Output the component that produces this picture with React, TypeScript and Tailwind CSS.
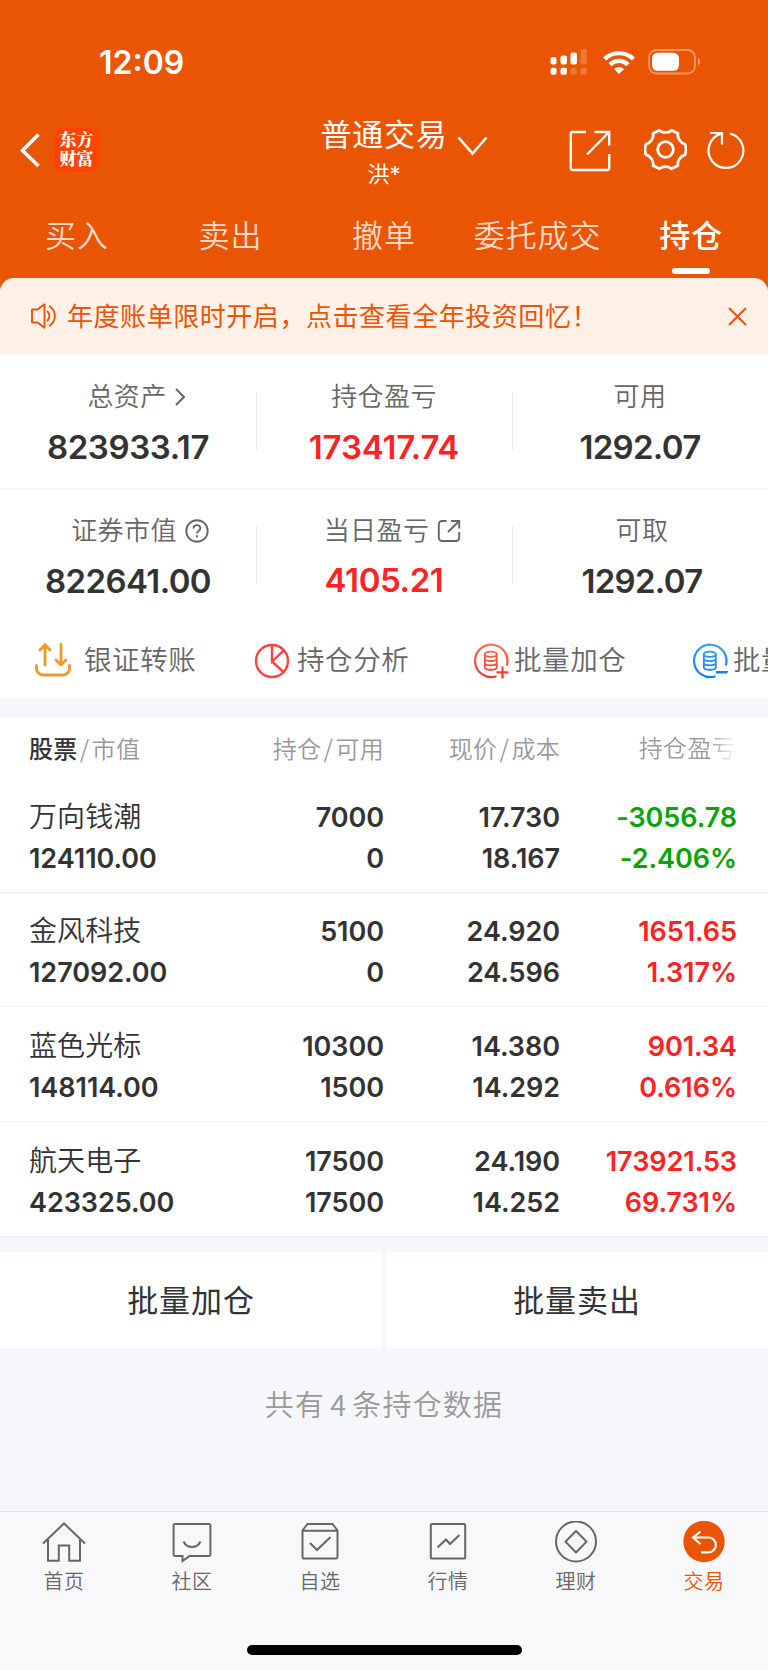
import React from "react";

const ORANGE = "#ea5504";

function SignalIcon() {
  return (
    <svg width="38" height="28" viewBox="0 0 38 28" fill="#fff">
      <rect x="1.500" y="9" width="6" height="7.5" rx="2" />
      <rect x="11.500" y="7.500" width="6.4" height="9" rx="2" />
      <rect x="21.500" y="4.500" width="6.4" height="12" rx="2" />
      <rect x="31.500" y="1" width="6.4" height="15.500" rx="2" opacity=".2" />
      <rect x="1.500" y="19.800" width="6" height="7" rx="2" />
      <rect x="11.500" y="19.800" width="6.4" height="7" rx="2" />
      <rect x="21.500" y="19.800" width="6.4" height="7" rx="2" opacity=".2" />
      <rect x="31.500" y="19.800" width="6.4" height="7" rx="2" opacity=".2" />
    </svg>
  );
}

function WifiIcon() {
  return (
    <svg width="34" height="26" viewBox="0 0 34 26" fill="none" stroke="#fff" strokeWidth="4.4">
      <path d="M2.6 10a20.5 20.5 0 0 1 28.8 0" />
      <path d="M8 15.6a12.8 12.8 0 0 1 18 0" />
      <path d="M17 25l-5-5.1a7.2 7.2 0 0 1 10 0z" fill="#fff" stroke="none" />
    </svg>
  );
}

function BatteryIcon() {
  return (
    <svg width="54" height="26" viewBox="0 0 54 26" fill="none">
      <rect x="1" y="1" width="46" height="23.500" rx="7.5" stroke="#fff" strokeOpacity=".4" strokeWidth="1.8" />
      <rect x="4" y="3.800" width="27" height="18" rx="5.5" fill="#fff" />
      <path d="M50 9c2.7 1.2 2.7 6.2 0 7.4z" fill="#fff" fillOpacity=".45" />
    </svg>
  );
}

function ExportIcon() {
  return (
    <svg width="42" height="42" viewBox="0 0 42 42" fill="none" stroke="#fff" strokeWidth="2.4">
      <path d="M17 2H3.5A1.8 1.8 0 0 0 1.8 3.7v34.6A1.8 1.8 0 0 0 3.5 40h35a1.8 1.8 0 0 0 1.7-1.7V24" />
      <path d="M25.500 2h14.700v13.500M40 2.200L18 24.500" />
    </svg>
  );
}

function GearIcon() {
  return (
    <svg width="43" height="43" viewBox="0 0 44 44" fill="none" stroke="#fff" strokeWidth="2.9" strokeLinejoin="round">
      <path d="M16 2.200C18 5.300 26 5.300 28 2.200L34.700 5.500C33.800 10 37.300 15.500 41.800 16.500C43.200 19.500 43.200 24.500 41.800 27.500C37.300 28.500 33.800 34 34.700 38.500L28 41.800C26 38.700 18 38.700 16 41.800L9.300 38.500C10.200 34 6.700 28.500 2.200 27.500C.8 24.500 .8 19.500 2.200 16.500C6.700 15.500 10.200 10 9.300 5.500Z" />
      <circle cx="22" cy="22" r="8" />
    </svg>
  );
}

function RefreshIcon() {
  return (
    <svg width="38" height="38" viewBox="0 0 38 38" fill="none" stroke="#fff" strokeWidth="2.200">
      <path d="M23 2.600A17.400 17.400 0 1 1 13.800 2.900" />
      <path d="M3 2h12v11.500" />
    </svg>
  );
}

function SpeakerIcon() {
  return (
    <svg width="26" height="26" viewBox="0 0 26 26" fill="none" stroke={ORANGE} strokeWidth="1.900">
      <path d="M2 6.500h5.500L14.500 1.300v23.400L7.500 19.500H2z" strokeLinejoin="round" />
      <path d="M17 8a6.500 6.500 0 0 1 0 10.200M19 3a11.500 11.500 0 0 1 0 20" />
    </svg>
  );
}

function TransferIcon() {
  return (
    <svg className="mt-[-2px] ml-[1px]" width="36" height="34" viewBox="0 0 36 34" fill="none" stroke="#f19a2b" strokeWidth="2.800" strokeLinecap="round" strokeLinejoin="round">
      <path d="M10 22V2M5 7l5-5.400L15 7M26 1.500v20M21 17l5 5 5-5" />
      <path d="M1.500 22.500v3a6.500 6.500 0 0 0 6.500 6.500h20a6.500 6.500 0 0 0 6.500-6.500v-3" />
    </svg>
  );
}

function PieIcon() {
  return (
    <svg width="36" height="36" viewBox="0 0 36 36" fill="none" stroke="#fa4343" strokeWidth="2.400">
      <circle cx="18" cy="18" r="16" />
      <path d="M18 2v16.500L30 7.200M18 18.500l11.500 10.500" />
    </svg>
  );
}

function BatchIcon({ minus = false }: { minus?: boolean }) {
  const id = minus ? "batch-minus" : "batch-plus";
  return (
    <svg width="36" height="36" viewBox="0 0 36 36" fill="none" stroke={`url(#${id})`} strokeWidth="2.200">
      <defs>
        <linearGradient id={id} gradientUnits="userSpaceOnUse" x1="0" y1="0" x2="0" y2="36">
          <stop offset="0" stopColor={minus ? "#3aa5f5" : "#ff7455"} />
          <stop offset="1" stopColor={minus ? "#0a78f0" : "#f5302a"} />
        </linearGradient>
      </defs>
      <path d="M33.800 22.500A16.200 16.200 0 1 0 23.500 33.200" />
      <ellipse cx="17.800" cy="11.200" rx="6" ry="2.600" strokeWidth="1.800" />
      <path d="M11.800 11.200v13c0 3.400 12 3.400 12 0v-13M11.800 15.500c0 3.400 12 3.400 12 0M11.800 19.800c0 3.400 12 3.400 12 0" strokeWidth="1.800" />
      {minus ? <path d="M24 29.300h11.500l.01.01" strokeWidth="2.400" /> : <path d="M23.500 29.300H35.500M29.500 23.500v12" strokeWidth="2.200" />}
    </svg>
  );
}

const columnTabs = ["买入", "卖出", "撤单", "委托成交", "持仓"];

interface MetricProps {
  label: string;
  value: string;
  red?: boolean;
  icon?: React.ReactNode;
  className?: string;
  labelClass?: string;
  valueClass?: string;
}

function Metric({ label, value, red, icon, className = "", labelClass = "", valueClass = "mt-[13.500px] tracking-[-0.400px]" }: MetricProps) {
  return (
    <div className={`flex w-64 flex-col items-center ${className}`}>
      <div className={`flex h-[36px] items-center text-[26px] leading-[36px] font-[350] tracking-[0.400px] text-[#666] ${labelClass}`}>
        {label}
        {icon}
      </div>
      <div className={`h-[36px] text-[33px] leading-[36px] font-semibold ${valueClass} ${red ? "text-[#fb2323]" : "text-[#333]"}`}>{value}</div>
    </div>
  );
}

interface Holding {
  name: string;
  market: string;
  held: string;
  usable: string;
  price: string;
  cost: string;
  profit: string;
  rate: string;
  down?: boolean;
}

const holdings: Holding[] = [
  { name: "万向钱潮", market: "124110.00", held: "7000", usable: "0", price: "17.730", cost: "18.167", profit: "-3056.78", rate: "-2.406%", down: true },
  { name: "金风科技", market: "127092.00", held: "5100", usable: "0", price: "24.920", cost: "24.596", profit: "1651.65", rate: "1.317%" },
  { name: "蓝色光标", market: "148114.00", held: "10300", usable: "1500", price: "14.380", cost: "14.292", profit: "901.34", rate: "0.616%" },
  { name: "航天电子", market: "423325.00", held: "17500", usable: "17500", price: "24.190", cost: "14.252", profit: "173921.53", rate: "69.731%" },
];

function Pair({ top, bottom, className }: { top: string; bottom: string; className: string }) {
  return (
    <div className={`flex flex-col text-right text-[27px] leading-[41.300px] font-semibold tracking-[-0.050px] ${className}`}>
      <span>{top}</span>
      <span>{bottom}</span>
    </div>
  );
}

function HoldingRow({ item }: { item: Holding }) {
  return (
    <div className="flex h-[114.700px] border-b border-[#f1f1f3] pt-[18.500px] text-[#333]">
      <div className="flex w-[214px] flex-col pl-[29px] leading-[41.300px]">
        <span className="text-[28px] font-[350] tracking-[0.100px]">{item.name}</span>
        <span className="text-[27px] font-semibold tracking-[-0.050px]">{item.market}</span>
      </div>
      <Pair top={item.held} bottom={item.usable} className="w-[170px]" />
      <Pair top={item.price} bottom={item.cost} className="w-[176px]" />
      <Pair top={item.profit} bottom={item.rate} className={item.down ? "w-[177px] text-[#0ba30b]" : "w-[177px] text-[#fb2323]"} />
    </div>
  );
}

function Slash() {
  return <span className="mx-[2.200px] font-['Noto_Sans_CJK_SC']">/</span>;
}

const navIcons: Record<string, React.ReactNode> = {
  首页: (
    <>
      <path d="M1 22.500L22 2.500l21 20" />
      <path d="M6 18.500v21.200h10.800V24.500h10.400v15.200H38V18.500" />
    </>
  ),
  社区: (
    <>
      <path d="M5 3h34a1.400 1.400 0 0 1 1.400 1.400V33.600A1.400 1.400 0 0 1 39 35H19.500L12.500 40v-5H5a1.400 1.400 0 0 1-1.400-1.400V4.400A1.400 1.400 0 0 1 5 3z" />
      <path d="M13.500 20.500c3.500 7.300 13.500 7.300 17 0" />
    </>
  ),
  自选: (
    <>
      <path d="M4.500 9.500L9.500 3h25l5 6.500v26.200A1.800 1.800 0 0 1 37.700 37.500H6.300a1.800 1.800 0 0 1-1.800-1.800zM4.500 9.800h35" />
      <path d="M12 22l7 7L32.500 16" />
    </>
  ),
  行情: (
    <>
      <rect x="4.800" y="3" width="34.400" height="34.600" rx="1.200" />
      <path d="M11.500 26.500l8.500-8 4 4.500L33.500 14" />
    </>
  ),
  理财: (
    <>
      <circle cx="22" cy="20.500" r="20" />
      <path d="M22 10L32.500 20.600 22 31.500 11.500 20.600z" strokeLinejoin="round" />
    </>
  ),
  交易: (
    <>
      <circle cx="22" cy="20.500" r="20.700" fill={ORANGE} stroke="none" />
      <path d="M18.500 10.500L11 16.500l7.500 6.500M11 16.500h15.500a7.400 7.400 0 0 1 0 14.800H19" stroke="#fff" strokeWidth="2.200" />
    </>
  ),
};

export default function App() {
  return (
    <div className="flex h-[1670px] w-[768px] flex-col overflow-hidden bg-[#f6f7fa] font-['Inter','Noto_Sans_CJK_SC',sans-serif] whitespace-nowrap">
      <header className="flex h-[290px] shrink-0 flex-col bg-[#ea5504] text-white">
        <div className="flex h-[94px] items-start pt-[48px] pl-[99px]">
          <div className="w-[450px] text-[32px] leading-[30px] font-semibold">12:09</div>
          <div className="flex items-center">
            <SignalIcon />
            <div className="ml-[15px]"><WifiIcon /></div>
            <div className="ml-[12px]"><BatteryIcon /></div>
          </div>
        </div>
        <div className="flex h-[104px] items-center pl-[19px]">
          <svg className="mt-[7px]" width="22" height="36" viewBox="0 0 22 36" fill="none" stroke="#fff" strokeWidth="3.600">
            <path d="M19.500 2.500L3.500 18.500l16 15.500" />
          </svg>
          <div className="mt-[7px] ml-[13px] flex size-[45px] flex-col items-center justify-center rounded-[10px] bg-[#ff4400] pb-[3px] font-['Noto_Serif_CJK_SC','Noto_Sans_CJK_SC',serif] text-[17px] leading-[19px] font-black">
            <span>东方</span>
            <span>财富</span>
          </div>
          <div className="mt-[14px] ml-[222px] flex w-[126px] flex-col items-center">
            <div className="text-[31px] leading-[42px] tracking-[0.700px]">普通交易</div>
            <div className="text-[22px] leading-[36px]">洪*</div>
          </div>
          <svg className="mt-[-1px] ml-[10px]" width="31" height="20" viewBox="0 0 31 20" fill="none" stroke="#fff" strokeWidth="2.600">
            <path d="M1.500 1.500L15.500 17.500 29.500 1.500" />
          </svg>
          <div className="mt-[9px] ml-[81px]"><ExportIcon /></div>
          <div className="mt-[7px] ml-[33px]"><GearIcon /></div>
          <div className="mt-[7px] ml-[20px]"><RefreshIcon /></div>
        </div>
        <nav className="flex h-[80px] pt-[17px]">
          {columnTabs.map((tab) => {
            const active = tab === "持仓";
            return (
              <div key={tab} className="flex flex-1 flex-col items-center text-[31px] leading-[42px] tracking-[0.900px]">
                <span className={active ? "font-medium" : "font-[350] text-[#fbd9c6]"}>{tab}</span>
                {active && <i className="mt-[11px] h-[6px] w-[38px] rounded-[3px] bg-white" />}
              </div>
            );
          })}
        </nav>
      </header>

      <section className="z-10 mt-[-12px] flex h-[76px] shrink-0 items-center rounded-t-[14px] bg-[#fff0e8] pr-[21px] pl-[30px] text-[#ea5504]">
        <SpeakerIcon />
        <div className="ml-[11px] flex-1 pt-[2px] text-[26px] leading-[36px] tracking-[0.550px]">年度账单限时开启，点击查看全年投资回忆！</div>
        <svg width="19" height="19" viewBox="0 0 19 19" stroke="#ea5504" strokeWidth="2">
          <path d="M1 1l17 17M18 1L1 18" />
        </svg>
      </section>

      <section className="shrink-0 bg-white">
        <div className="flex h-[135px] border-b border-[#f1f1f3] pt-[25px]">
          <Metric
            label="总资产"
            value="823933.17"
            labelClass="pl-[19px]"
            icon={<svg className="ml-[8px]" width="13" height="20" viewBox="0 0 13 20" fill="none" stroke="#666" strokeWidth="2"><path d="M1 2l8 8-8 8" /></svg>}
          />
          <i className="mt-[13px] -mr-px h-[58px] w-px bg-[#ececef]" />
          <Metric label="持仓盈亏" value="173417.74" red valueClass="mt-[13.500px] tracking-[-0.200px]" />
          <i className="mt-[13px] -mr-px h-[58px] w-px bg-[#ececef]" />
          <Metric label="可用" value="1292.07" valueClass="mt-[13.500px] tracking-[-0.700px]" />
        </div>
        <div className="flex h-[134px] pt-[24px]">
          <Metric
            label="证券市值"
            value="822641.00"
            labelClass="pl-[24px]"
            valueClass="mt-[13.500px] tracking-[-0.600px]"
            icon={
              <svg className="ml-[8px]" width="24" height="24" viewBox="0 0 24 24" fill="none" stroke="#666" strokeWidth="1.900">
                <circle cx="12" cy="12" r="10.700" />
                <path d="M8.600 9.500c0-4.500 6.800-4.300 6.800-.3 0 2.500-3.400 2.700-3.400 5.300M12 16.300v2.200" />
              </svg>
            }
          />
          <i className="mt-[13px] -mr-px h-[58px] w-px bg-[#ececef]" />
          <Metric
            label="当日盈亏"
            value="4105.21"
            red
            labelClass="pl-[17px]"
            valueClass="mt-[12.500px] tracking-[-0.400px]"
            icon={
              <svg className="ml-[8px]" width="24" height="24" viewBox="0 0 24 24" fill="none" stroke="#666" strokeWidth="1.900">
                <path d="M9.500 2H5a3.200 3.200 0 0 0-3.200 3.200v13.600A3.200 3.200 0 0 0 5 22h14a3.200 3.200 0 0 0 3.200-3.200V13M14 2h8.200v7.500M22 2.200L11 13" />
              </svg>
            }
          />
          <i className="mt-[13px] -mr-px h-[58px] w-px bg-[#ececef]" />
          <Metric label="可取" value="1292.07" className="pl-[4px]" valueClass="mt-[13.500px] tracking-[-0.700px]" />
        </div>
        <div className="flex h-[75px] pl-[34px] text-[27.500px] leading-[75px] font-[350] tracking-[0.600px] text-[#666]">
          <div className="flex w-[220px] shrink-0 items-center"><TransferIcon /><span className="ml-[13px]">银证转账</span></div>
          <div className="flex w-[219px] shrink-0 items-center"><PieIcon /><span className="ml-[7px]">持仓分析</span></div>
          <div className="flex w-[219px] shrink-0 items-center"><BatchIcon /><span className="ml-[5px]">批量加仓</span></div>
          <div className="flex w-[219px] shrink-0 items-center"><BatchIcon minus /><span className="ml-[5px]">批量卖出</span></div>
        </div>
      </section>

      <section className="mt-[19px] flex shrink-0 flex-col bg-white">
        <div className="flex h-[61px] text-[24px] leading-[61px] font-[350] tracking-[0.300px] text-[#999]">
          <div className="w-[214px] pl-[29px]"><b className="font-medium text-[#333]">股票</b><Slash />市值</div>
          <div className="w-[170px] text-right">持仓<Slash />可用</div>
          <div className="w-[176px] text-right">现价<Slash />成本</div>
          <div className="w-[176px] bg-gradient-to-r from-[#999] from-85% to-white bg-clip-text pt-[1px] text-right text-transparent">持仓盈亏</div>
        </div>
        {holdings.map((item) => <HoldingRow key={item.name} item={item} />)}
      </section>

      <section className="mt-[15px] flex h-[96px] shrink-0 gap-[4px] text-center text-[31px] leading-[97px] tracking-[0.900px] text-[#333]">
        <div className="flex-1 bg-white">批量加仓</div>
        <div className="flex-1 bg-white">批量卖出</div>
      </section>

      <div className="h-[163px] shrink-0 pt-[34px] text-center text-[29px] leading-[42px] font-[350] tracking-[1.200px] text-[#999]">
        共有<span className="mx-[5px] font-['Noto_Sans_CJK_SC']">4</span>条持仓数据
      </div>

      <footer className="flex flex-1 flex-col items-center border-t border-[#e2e2e5] bg-[#f8f8fb]">
        <div className="flex w-full">
          {Object.keys(navIcons).map((name) => (
            <div key={name} className={name === "交易" ? "flex flex-1 flex-col items-center text-[#ea5504]" : "flex flex-1 flex-col items-center text-[#666]"}>
              <svg className="mt-[9px]" width="44" height="42" viewBox="0 0 44 42" fill="none" stroke="#666" strokeWidth="2">{navIcons[name]}</svg>
              <span className="mt-[4px] text-[20px] leading-[30px] font-[350] tracking-[0.500px]">{name}</span>
            </div>
          ))}
        </div>
        <div className="mt-[48px] h-[10px] w-[275px] rounded-full bg-black" />
      </footer>
    </div>
  );
}
